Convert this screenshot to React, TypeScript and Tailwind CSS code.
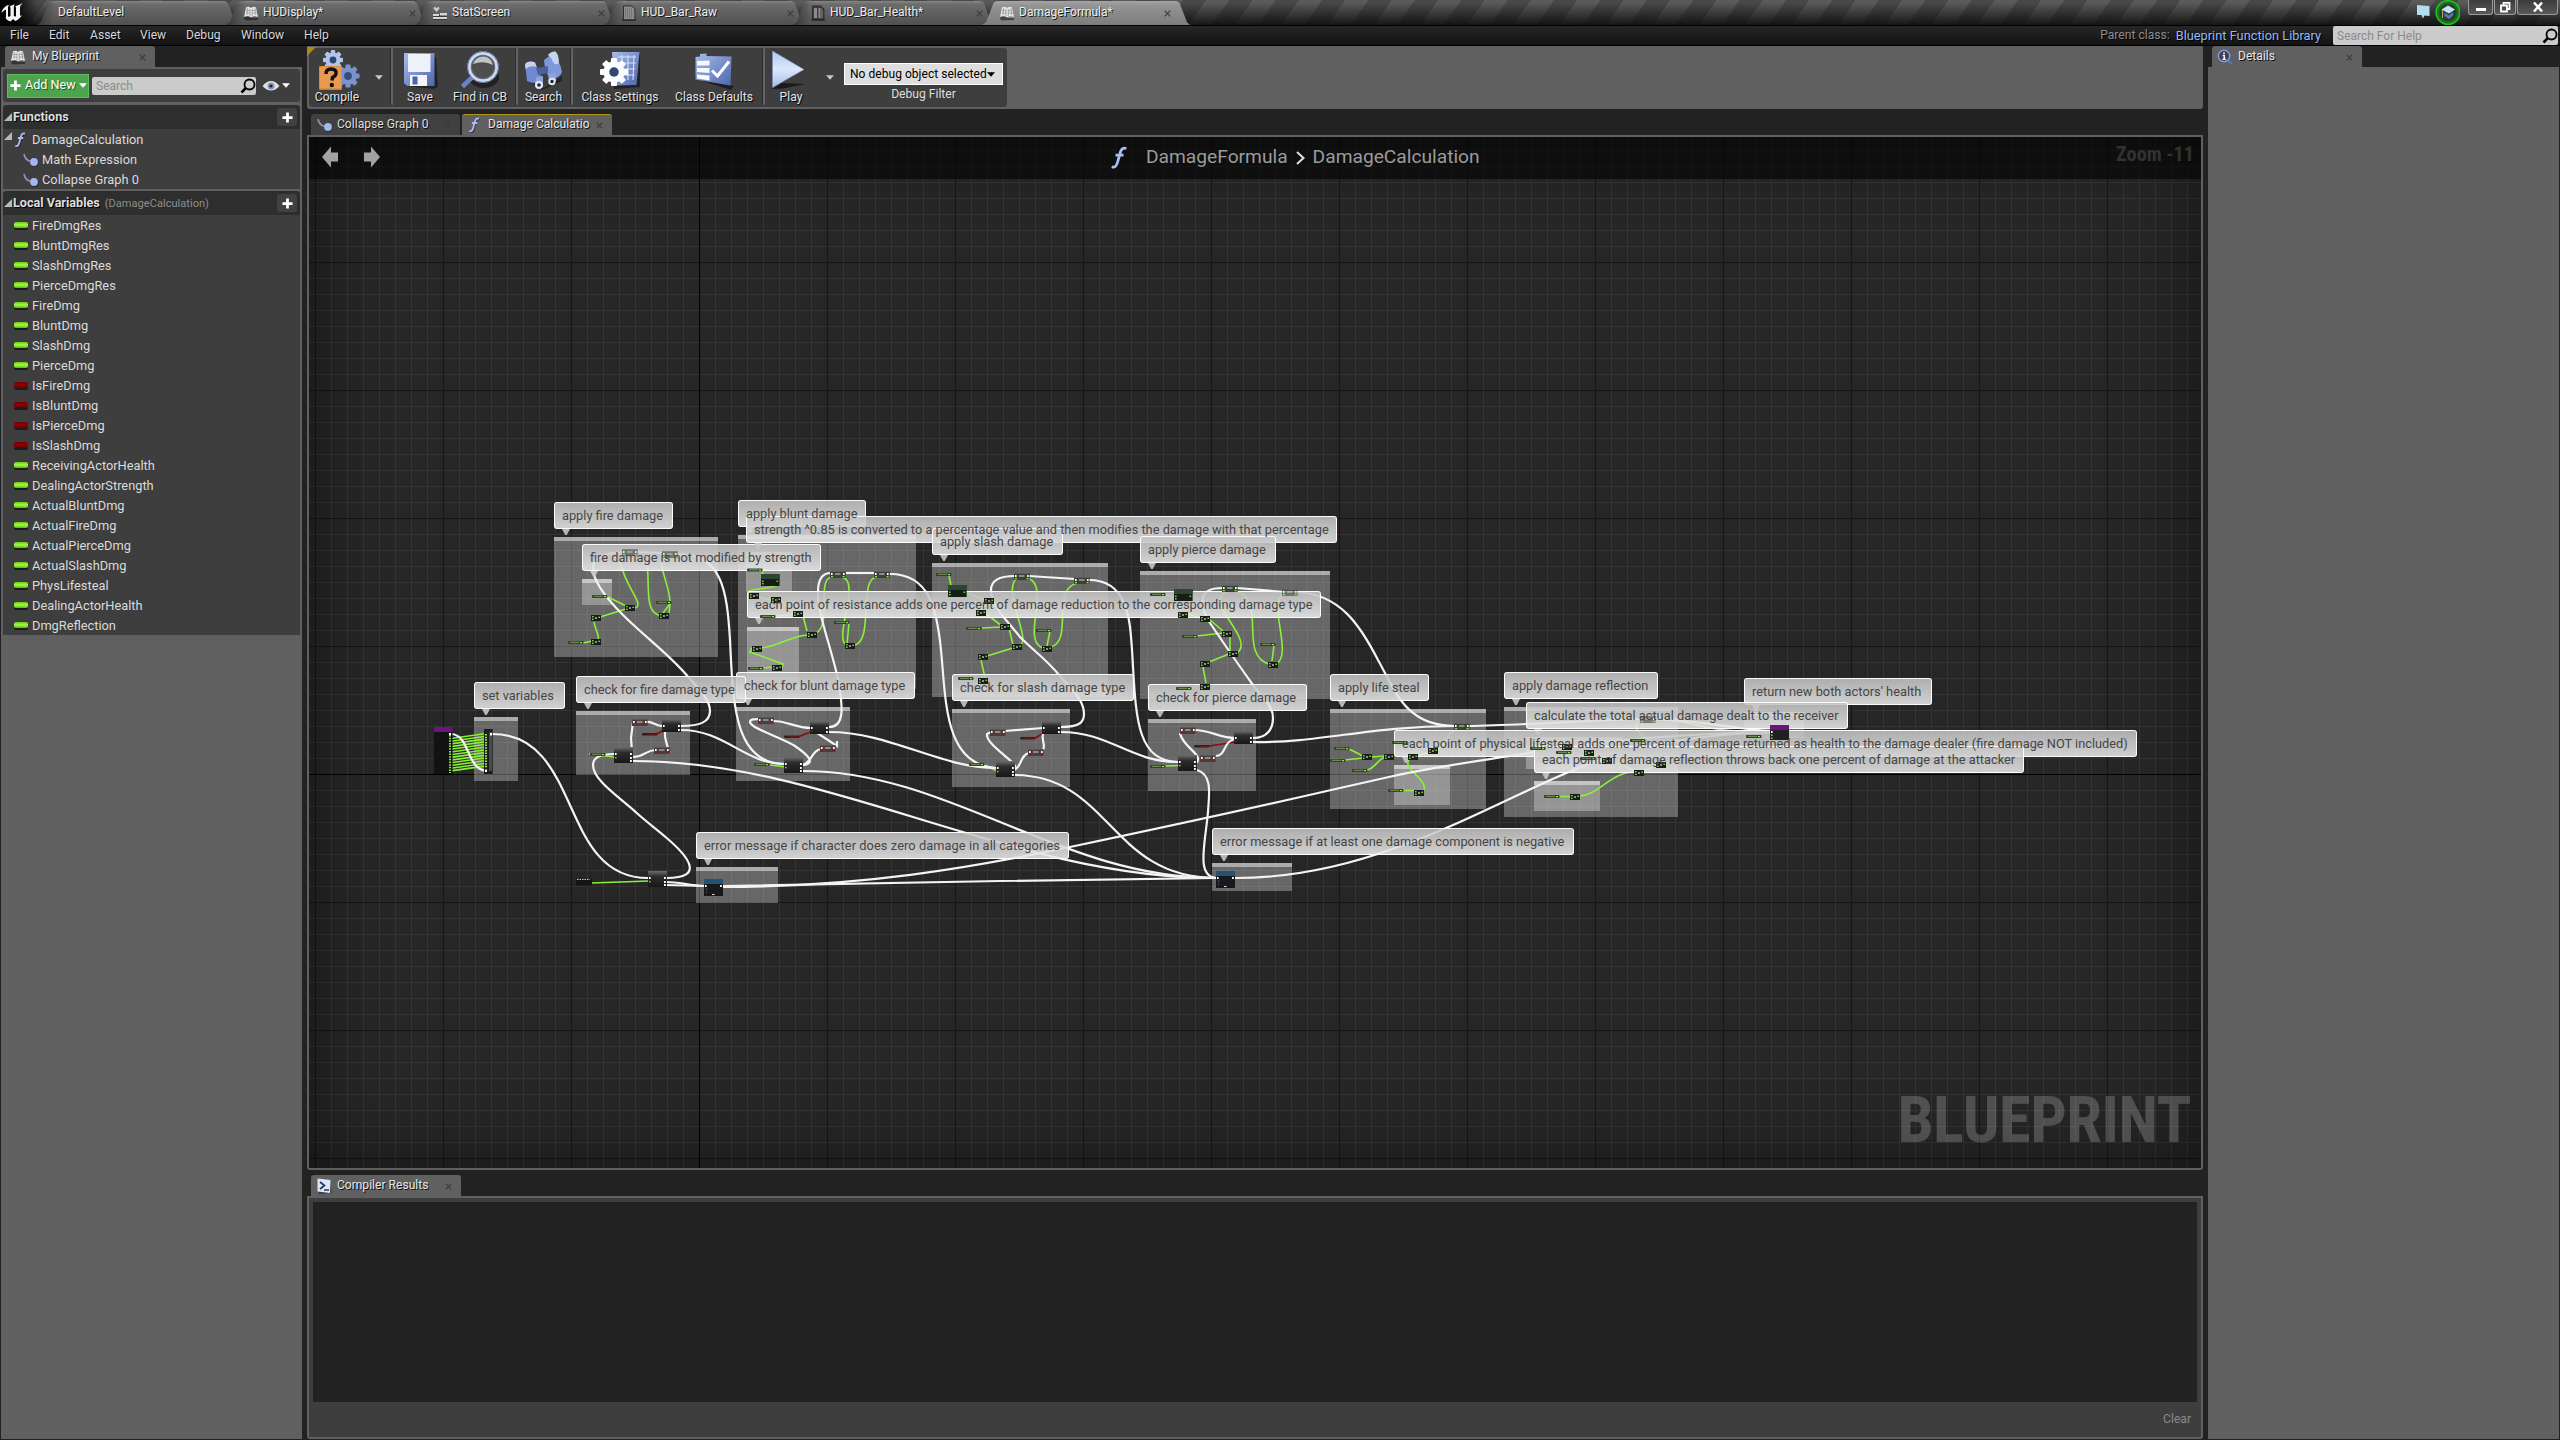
import React from "react";

const OX = 309;
const OY = 137;

const fileTabs = [
  { label: "DefaultLevel", icon: "none" },
  { label: "HUDisplay*", icon: "blueprint" },
  { label: "StatScreen", icon: "widget" },
  { label: "HUD_Bar_Raw", icon: "doc" },
  { label: "HUD_Bar_Health*", icon: "docgrid" },
  { label: "DamageFormula*", icon: "blueprint", active: true },
];

const variables: [string, boolean][] = [
  ["FireDmgRes", true],
  ["BluntDmgRes", true],
  ["SlashDmgRes", true],
  ["PierceDmgRes", true],
  ["FireDmg", true],
  ["BluntDmg", true],
  ["SlashDmg", true],
  ["PierceDmg", true],
  ["IsFireDmg", false],
  ["IsBluntDmg", false],
  ["IsPierceDmg", false],
  ["IsSlashDmg", false],
  ["ReceivingActorHealth", true],
  ["DealingActorStrength", true],
  ["ActualBluntDmg", true],
  ["ActualFireDmg", true],
  ["ActualPierceDmg", true],
  ["ActualSlashDmg", true],
  ["PhysLifesteal", true],
  ["DealingActorHealth", true],
  ["DmgReflection", true],
];

// x, y, width, height of the comment frames
const frames: [number, number, number, number][] = [
  [554, 537, 164, 120],
  [582, 579, 30, 26],
  [738, 535, 178, 154],
  [746, 552, 46, 40],
  [747, 627, 52, 54],
  [932, 563, 176, 134],
  [1140, 571, 190, 128],
  [576, 711, 114, 64],
  [736, 707, 114, 74],
  [952, 709, 118, 78],
  [1148, 719, 108, 72],
  [1330, 709, 156, 100],
  [1394, 765, 56, 40],
  [1504, 707, 174, 110],
  [1526, 737, 96, 32],
  [1534, 781, 66, 30],
  [1744, 712, 60, 26],
  [474, 717, 44, 64],
  [696, 867, 82, 36],
  [1212, 863, 80, 28],
];

// x, y, width, text and letter spacing of the comment bubbles
const bubbles: [number, number, number, string, number][] = [
  [554, 502, 119, "apply fire damage", 0],
  [582, 544, 239, "fire damage is not modified by strength", 0],
  [738, 500, 128, "apply blunt damage", 0],
  [746, 516, 591, "strength ^0.85 is converted to a percentage value and then modifies the damage with that percentage", 0.015],
  [932, 528, 131, "apply slash damage", 0],
  [1140, 536, 136, "apply pierce damage", 0],
  [747, 591, 574, "each point of resistance adds one percent of damage reduction to the corresponding damage type", 0.017],
  [736, 672, 179, "check for blunt damage type", 0],
  [576, 676, 170, "check for fire damage type", 0],
  [952, 674, 182, "check for slash damage type", 0.09],
  [1148, 684, 159, "check for pierce damage", 0],
  [1330, 674, 99, "apply life steal", 0],
  [1504, 672, 154, "apply damage reflection", 0],
  [1744, 678, 188, "return new both actors' health", 0.03],
  [1526, 702, 322, "calculate the total actual damage dealt to the receiver", 0.015],
  [1394, 730, 743, "each point of physical lifesteal adds one percent of damage returned as health to the damage dealer (fire damage NOT included)", 0],
  [1534, 746, 490, "each point of damage reflection throws back one percent of damage at the attacker", 0.01],
  [474, 682, 91, "set variables", 0],
  [696, 832, 373, "error message if character does zero damage in all categories", 0.095],
  [1212, 828, 362, "error message if at least one damage component is negative", 0.015],
];

const execWires = [
  "M452 734 C470 736 466 768 486 771",
  "M492 734 C583 734 558 878 648 878",
  "M666.7 878 C705 878 689 857 666.7 838 C655 828 648 823 636.7 813 C618 796 593 780 593 765 C593 757 600 754 614 754",
  "M666 882 C680 882 690 886 705 886",
  "M666 885 L705 886",
  "M723 886 L1000 881 L1216 878",
  "M723 887 C860 887 970 868 1070 847 C1170 826 1240 811 1340 788 L1380 779 C1430 767 1480 761 1535 752 C1620 738 1700 733 1770 732",
  "M633 761 C830 761 1010 878 1216 878",
  "M803 771 C950 771 1060 878 1216 878",
  "M1014 775 C1110 775 1110 878 1216 878",
  "M1197 770 C1213 775 1209 795 1208 812 C1205 845 1196 876 1216 878",
  "M681 726 C700 726 710 722 710 711 C710 700 700 690 688 676.7 C670 655 645 637 623 615 C608 600 593 582 593 568 C593 556 608 552.5 623 552.5",
  "M638 552 L663 553",
  "M678 554 C722 554 727 590 730 640 C733 700 733 764 785 764",
  "M681 730 C725 730 745 764 785 764",
  "M632 751 L631 738 L633 722",
  "M647 722 C653 721 656 727 664 726",
  "M633 757 C645 757 645 750 656 750",
  "M668 749 C667 742 664 740 665 731",
  "M773 721 C788 721 795 728 811 728",
  "M803 765 C818 763 805 753 795 746 C780 737 750 728 750 722 C750 719 755 719 760 719",
  "M803 765 C812 762 812 750 821 749",
  "M811 729 L837 746 L837 741",
  "M829 727 C845 727 842 706 840 690 C836 660 817 615 818 592 C818 580 822 573 831 573",
  "M846 573 L876 573",
  "M890 574 C930 574 937 610 941 650 C946 700 944 765 996 768",
  "M829 732 C890 732 940 768 996 768",
  "M1005 731 L1043 728",
  "M1014 768 C1022 765 985 745 987 734 L991 732",
  "M1014 770 C1022 767 1020 755 1029 753",
  "M1043 750 C1046 745 1041 740 1043 733",
  "M1061 727 C1080 727 1084 722 1084 714 C1084 700 1072 690 1060 676 C1045 658 1035 652 1020 637 C1005 618 991 606 991 590 C991 580 1000 576 1015 576",
  "M1029 576 L1075 579",
  "M1089 580 C1128 580 1130 620 1132 650 C1136 710 1134 762 1178 762",
  "M1061 732 C1110 732 1130 762 1178 762",
  "M1194 730 C1210 730 1220 738 1235 738",
  "M1196 763 C1205 755 1182 747 1180 733",
  "M1215 756 C1227 756 1222 742 1235 739",
  "M1253 738 C1268 738 1273 728 1273 718 C1273 705 1262 698 1253 685 C1235 660 1225 645 1210 623 C1203 612 1202 605 1202.7 600 C1203 590 1212 588 1223 588",
  "M1237 588 L1284 592",
  "M1297 592 C1340 594 1360 625 1378 660 C1395 690 1405 726 1455 726",
  "M1253 742 C1320 743 1370 726 1455 726",
  "M1469 726 C1520 725 1580 721 1640 719",
  "M1655 719 C1700 720 1740 730 1770 731",
  "M1235 878 C1290 878 1340 868 1395 848 C1440 833 1490 808 1533 788 C1600 756 1660 736 1770 732",
];

const dataWires = [
  "M591 883 L649 881",
  "M589 754 L615 757",
  "M606 596 L626 606",
  "M600 617 L626 609",
  "M594 622 C595 630 600 635 598 640",
  "M583 643 L592 641",
  "M620 561 C624 582 638 598 638 604 C638 608 635 608 634 607",
  "M647 560 C650 590 644 612 661 616",
  "M661 562 C664 580 670 590 670 602",
  "M663 613 L670 604 L669 613",
  "M761 571 L764 576",
  "M779 584 C775 589 752 588 748 592",
  "M758 597 L772 600",
  "M780 600 L794 612",
  "M775 616 L794 614",
  "M803 616 L807 631",
  "M761 648 C780 646 790 636 808 635",
  "M752 648 L750 652 L783 664 L782 668",
  "M762 668 L774 667",
  "M816 633 C832 626 816 578 832 577",
  "M842 577 C862 582 832 640 847 645",
  "M849 623 L847 644",
  "M855 645 C874 640 858 578 877 577",
  "M949 575 L951 586",
  "M966 592 L985 600",
  "M990 603 L978 610",
  "M985 613 L1002 626",
  "M982 628 L1001 627",
  "M1009 628 L1013 645",
  "M987 656 L1013 648",
  "M981 660 L985 678",
  "M1017 578 C1001 590 1032 640 1020 645",
  "M1028 578 C1052 588 1020 640 1043 648",
  "M1050 631 L1047 646",
  "M1051 647 C1074 640 1050 588 1078 583",
  "M1209 619 L1223 631",
  "M1197 636 L1223 633",
  "M1230 636 L1230 651",
  "M1209 662 L1229 654",
  "M1203 667 L1206 683",
  "M1191 688 L1201 685",
  "M1226 592 C1203 602 1256 640 1237 653",
  "M1237 592 C1267 600 1238 655 1269 664",
  "M1274 645 L1272 661",
  "M1276 664 C1294 655 1266 600 1284 594",
  "M1188 614 L1201 618",
  "M1166 595 L1175 597",
  "M1165 766 L1179 765.5",
  "M770 765 L786 767",
  "M984 765 L997 771",
  "M1349 749 L1363 756",
  "M1345 760 L1363 758",
  "M1371 757 L1385 756",
  "M1367 770 C1376 768 1378 758 1386 757",
  "M1409 760 C1402 768 1428 780 1424 790",
  "M1403 790.5 H1415",
  "M1417 756 L1429 752",
  "M1437 750 C1448 745 1445 733 1456 730",
  "M1559 796.5 H1571",
  "M1579 796 C1600 795 1610 772 1635 772",
  "M1611 760 L1635 771",
  "M1643 771 L1657 765",
  "M1637 722 C1634 735 1645 735 1653 742",
  "M1655 720 C1690 720 1700 728 1725 730 L1770 734",
];

const redWires = [
  "M656 734 L667 729",
  "M799 736.5 L813 731",
  "M1035 738 L1046 732",
  "M1209 746 L1236 742",
];

const opNodes: [number, number][] = [
  [625, 605], [591, 615], [591, 639], [659, 613],
  [749, 593], [771, 597], [793, 611], [807, 632], [845, 643], [752, 646], [772, 665],
  [984, 598], [976, 610], [1000, 624], [1012, 644], [978, 654], [978, 678], [1042, 646],
  [1178, 612], [1200, 616], [1222, 631], [1228, 651], [1200, 661], [1200, 684], [1268, 662],
  [1362, 754], [1384, 754], [1408, 754], [1428, 748], [1414, 790],
  [1562, 744], [1584, 750], [1602, 758], [1634, 770], [1656, 762], [1570, 794],
];

const pills: [number, number][] = [
  [592, 595], [656, 601], [568, 641], [590, 753],
  [747, 568.5], [760, 615], [834, 621], [748, 667], [754, 763],
  [936, 573], [966, 627], [1036, 629], [958, 677], [969, 763],
  [1150, 593], [1182, 635], [1260, 643], [1176, 687], [1150, 765],
  [1334, 747], [1330, 759], [1352, 769], [1392, 741], [1388, 789],
  [1530, 747], [1556, 751], [1580, 757], [1630, 739], [1544, 795], [1746, 735],
];

const redPills: [number, number][] = [
  [642, 733], [784, 735.5], [1020, 737], [1194, 745],
];

const setNodes: [number, number, boolean][] = [
  [622, 549, false], [662, 551, false], [830, 571, false], [874, 571, false],
  [1014, 573, false], [1074, 577, false], [1222, 585, false], [1282, 589, false],
  [1454, 723, false], [1640, 716, false],
  [632, 719, true], [654, 747, true], [758, 717, true], [820, 745, true],
  [990, 729, true], [1028, 749, true], [1180, 727, true], [1200, 755, true],
];

const branchNodes: [number, number, number][] = [
  [614, 747, 16], [662, 719, 13], [784, 757, 16], [810, 721, 13],
  [996, 761, 16], [1042, 721, 13], [1178, 755, 16], [1234, 731, 13],
  [648, 871, 16],
];

const powNodes: [number, number][] = [[761, 574], [948, 585], [1174, 589]];

function BlueprintIcon() {
  return (
    <svg viewBox="0 0 17 16" className="h-4 w-[17px] shrink-0">
      <path d="M1 14 L3 5 Q5 3 8 5 L8.500 13 L15 13 Q16 15 13 15 L3 15.500Z" fill="#111" opacity=".55" />
      <path d="M1 12 L3 2.500 Q5.500 1 8 3 Q10.500 1 13 2.500 L15 12 Q11 10.500 8 12.500 Q5 10.500 1 12Z" fill="#e4e4e4" />
      <path d="M4.500 3 L4 10 M7 4 V11 M9.300 4 V11 M12 3 L12.600 10 M3 5.500H7 M3 8H7 M9 5.500H13 M9 8H14" stroke="#9a9a9a" strokeWidth=".8" />
    </svg>
  );
}

function TabIcon({ kind }: { kind: string }) {
  if (kind === "blueprint") return <BlueprintIcon />;
  if (kind === "widget")
    return (
      <svg viewBox="0 0 17 16" className="h-4 w-[17px] shrink-0">
        <path d="M4.500 7 L1.500 3.500 Q2 1 4.500 3 Q7 1 7.500 3.500Z" fill="#c9c9c9" />
        <path d="M1 10H15V12H1Z M1 13.500H15V15H1Z" fill="#222" opacity=".6" />
        <path d="M1 9H7V11H1Z M8 8H15V10.500H8Z M1 12H15V14H1Z" fill="#d6d6d6" />
      </svg>
    );
  if (kind === "doc" || kind === "docgrid")
    return (
      <svg viewBox="0 0 17 16" className="h-4 w-[17px] shrink-0">
        <path d="M2.500 1H11L14 4V15H2.500Z" fill={kind === "doc" ? "#8e8e8e" : "#3c3c3c"} stroke="#2c2c2c" />
        <path
          d="M4 4H12 M4 6H12.500 M4 8H12.500 M4 10H12.500 M4 12H12.500"
          stroke={kind === "doc" ? "#5a5a5a" : "#d8d8d8"}
          strokeDasharray={kind === "doc" ? "1 1" : "3 1.500 2 1"}
        />
        <path d="M1 15H15" stroke="#1c1c1c" />
      </svg>
    );
  return null;
}

function FunctionIcon({ className }: { className: string }) {
  return (
    <svg viewBox="0 0 14 18" className={className}>
      <path d="M1.500 16 Q4.500 17.500 5.600 12.500 L7.600 5 Q8.700 .8 12.500 2" fill="none" stroke="#111" strokeWidth="2" opacity=".5" transform="translate(1 .8)" />
      <path d="M1.200 15.600 Q4.300 17 5.600 12 L7.600 4.700 Q8.600 .8 12.200 1.900 M4 6.800H10" fill="none" stroke="#a9bdf2" strokeWidth="2.100" />
    </svg>
  );
}

function GraphIcon() {
  return (
    <svg viewBox="0 0 17 14" className="h-[14px] w-[17px] shrink-0">
      <path d="M1 1 Q2 7 8 8.500" fill="none" stroke="#8a93ad" strokeWidth="1.700" />
      <circle cx="11.500" cy="10" r="4" fill="#1b1b1b" opacity=".6" />
      <circle cx="11" cy="9" r="3.900" fill="#a3b6ee" />
    </svg>
  );
}

function Close({ className = "" }: { className?: string }) {
  return (
    <svg viewBox="0 0 7 7" className={`h-[7px] w-[7px] shrink-0 ${className}`}>
      <path d="M.7 .7 L6.300 6.300 M6.300 .7 L.7 6.300" stroke="#3b3b3b" strokeWidth="1.200" />
    </svg>
  );
}

function Magnifier() {
  return (
    <svg viewBox="0 0 16 16" className="h-4 w-4 shrink-0">
      <circle cx="9.500" cy="6.500" r="5" fill="none" stroke="#000" strokeWidth="1.800" />
      <path d="M5.700 10.200 L1.500 14.500" stroke="#000" strokeWidth="2.600" />
    </svg>
  );
}

function Chevron({ className }: { className: string }) {
  return (
    <svg viewBox="0 0 8 5" className={`h-[5px] w-2 shrink-0 ${className}`}>
      <path d="M0 .3H8L4 4.700Z" fill="currentColor" />
    </svg>
  );
}

function Plus({ className }: { className: string }) {
  return (
    <svg viewBox="0 0 12 12" className={className}>
      <path d="M6 .5V11.500M.5 6H11.500" stroke="#fff" strokeWidth="3" />
    </svg>
  );
}

function TitleBar() {
  return (
    <div className="flex h-[25px] w-full shrink-0 bg-[linear-gradient(180deg,rgba(0,0,0,0)_10%,rgba(10,10,10,0.85)_100%),repeating-linear-gradient(125deg,#5a5a5a_0px,#5a5a5a_19px,#484848_19px,#484848_38px)]">
      <div className="h-full w-[37px] shrink-0 bg-[linear-gradient(90deg,#050505_40%,transparent)]">
        <svg viewBox="0 0 26 24" className="h-6 w-[26px]">
          <path
            d="M1.500 13 Q2.500 6.500 9.500 4.500 Q8 5.600 8 7.500 V15.500 Q8 17.200 9.400 16.800 L10.500 15.800 V8 Q10.500 6.600 9.500 6.300 Q14 5 14.500 3.800 Q13.800 6 13.800 8 V15.600 Q14.500 17.200 16 16.300 V8 Q16 6.600 15 6.300 Q19 5.500 22.500 3 Q20 5.600 20 8 V15 Q20 16.200 21.800 15.200 Q19.500 19.500 15 21 L13.200 19 L10.400 21.400 Q6.500 20.500 5.500 17.500 Q6 17.700 6 16.500 V10 Q5.500 8.500 1.500 13Z"
            fill="#f4f4f4"
          />
        </svg>
      </div>
      {fileTabs.map((t) => (
        <div
          key={t.label}
          className={`relative -mr-3 mt-px flex h-6 shrink-0 items-center [clip-path:polygon(0_100%,2%_88%,5.500%_8%,7%_0,93.500%_0,95%_8%,98.500%_88%,100%_100%)] ${
            t.icon === "none" ? "pl-[26px]" : "pl-[21px]"
          } ${
            t.active
              ? "w-[208px] bg-[linear-gradient(180deg,#a4a4a4_0%,#939393_20%,#7d7d7d_100%)]"
              : "w-[201px] bg-[linear-gradient(100deg,rgba(20,20,20,0.55)_0px,rgba(20,20,20,0)_20px),linear-gradient(180deg,#858585_0%,#6c6c6c_14%,#505050_100%)]"
          }`}
        >
          {t.icon !== "none" && (
            <span className="mr-1 flex h-4 w-[17px] -translate-x-1">
              <TabIcon kind={t.icon} />
            </span>
          )}
          <span className="-mt-[3px] flex-1 -translate-x-[5px] text-[12px] text-[#ececec] [text-shadow:1px_1px_0_#1a1a1a]">{t.label}</span>
          {t.icon !== "none" && <Close className={t.active ? "mr-[19px]" : "mr-[11px]"} />}
        </div>
      ))}
      <div className="ml-auto flex h-full pr-[2px]">
        <svg viewBox="0 0 46 26" className="mr-[8px] h-[26px] w-[46px]">
          <path d="M3 5 L15.500 6 V16 L10.500 15.500 L9 18.500 L7.500 15 L3 15Z" fill="#b4dcee" />
          <circle cx="34" cy="12.500" r="11.700" fill="#23402a" stroke="#10d010" strokeWidth="1.800" />
          <circle cx="34" cy="12.500" r="10" fill="none" stroke="#1d8a22" strokeWidth="2.600" opacity=".6" />
          <path d="M27.500 9.500 L34 5.500 L41 9.500 L35 13.500Z" fill="#c8e0f4" />
          <path d="M30.500 12.500 L35 15.500 L39 12 V15.500 L35 19 L30.500 16Z" fill="#5a7ab4" />
          <path d="M28.500 10V18" stroke="#b89a62" strokeWidth="1.200" />
        </svg>
        {["min", "max", "close"].map((k) => (
          <div
            key={k}
            className={`mr-px flex h-[15px] items-center justify-center rounded-b-[3px] border border-t-0 border-[#9a9a9a] bg-[linear-gradient(180deg,#3c3c3c,#585858)] last:mr-0 ${
              k === "close" ? "w-[41px]" : k === "min" ? "w-[25px]" : "w-[22px]"
            }`}
          >
            <svg viewBox="0 0 12 12" className="h-3 w-3">
              {k === "min" && <path d="M1 8.500H11" stroke="#fff" strokeWidth="3" />}
              {k === "max" && <path d="M2 4.500H8V10.500H2Z M4.500 4V1.800H10.500V8H8.500" fill="none" stroke="#fff" strokeWidth="1.800" />}
              {k === "close" && <path d="M2 1.500 L10 10.500 M10 1.500 L2 10.500" stroke="#fff" strokeWidth="2.500" />}
            </svg>
          </div>
        ))}
      </div>
    </div>
  );
}

function MenuBar() {
  return (
    <div className="flex h-[21px] shrink-0 items-center border-y border-black bg-[linear-gradient(180deg,#262626,#131313)] text-[12.100px] text-[#d6d6d6] [text-shadow:1px_1px_0_#000]">
      <span className="ml-[10px] w-[39px]">File</span>
      <span className="w-[41px]">Edit</span>
      <span className="w-[50px]">Asset</span>
      <span className="w-[46px]">View</span>
      <span className="w-[55px]">Debug</span>
      <span className="w-[63px]">Window</span>
      <span>Help</span>
      <span className="ml-auto text-[#8e8e8e]">Parent class:</span>
      <span className="ml-[6px] mr-3 text-[12.800px] text-[#8cb9ff]">Blueprint Function Library</span>
      <div className="mr-[2px] flex h-[19px] w-[225px] items-center rounded-[2px] bg-[#cbcbcb] pl-[4px] text-[12px] text-[#8b8b8b] [text-shadow:none]">
        <span className="flex-1">Search For Help</span>
        <Magnifier />
      </div>
    </div>
  );
}

function PanelTab({ icon, label, className = "" }: { icon: React.ReactNode; label: string; className?: string }) {
  return (
    <div className={`flex h-[21px] w-[150px] shrink-0 items-center rounded-t-[3px] bg-[#606060] pl-[5px] ${className}`}>
      {icon}
      <span className="-mt-px ml-[5px] flex-1 text-[12.100px] text-[#e6e6e6] [text-shadow:1px_1px_0_#111]">{label}</span>
      <Close className="mr-[9px] mt-px" />
    </div>
  );
}

function SectionHeader({ title, sub }: { title: string; sub?: string }) {
  return (
    <div className="flex h-6 items-center rounded-t-[3px] bg-[#2e2e2e]">
      <svg viewBox="0 0 8 8" className="ml-px h-2 w-2">
        <path d="M8 0V8H0Z" fill="#b9b9b9" />
      </svg>
      <span className="ml-px text-[12.600px] font-bold text-[#dedede] [text-shadow:1px_1px_0_#000]">{title}</span>
      {sub && <span className="ml-[5px] mt-[2px] text-[11.100px] text-[#8d8d8d]">{sub}</span>}
      <div className="ml-auto mr-[3px] flex h-[18px] w-5 items-center justify-center rounded-[3px] bg-[#414141]">
        <Plus className="h-[11px] w-[11px]" />
      </div>
    </div>
  );
}

function MyBlueprint() {
  return (
    <div className="flex w-[302px] shrink-0 flex-col pl-px">
      <PanelTab icon={<BlueprintIcon />} label="My Blueprint" className="ml-1" />
      <div className="flex-1 bg-[#606060] px-[2px] pt-[2px]">
        <div className="mb-[3px] flex h-[33px] items-center rounded-[3px] bg-[#3e3e3e] pl-1">
          <div className="flex h-6 w-[82px] items-center border border-[#5cbf5c] bg-[#4ca54e] pl-[2px]">
            <Plus className="h-[11px] w-[11px]" />
            <span className="ml-1 text-[12.600px] text-white [text-shadow:1px_1px_0_#1e5a20]">Add New</span>
            <Chevron className="ml-[3px] text-white" />
          </div>
          <div className="ml-[3px] flex h-[18px] w-[164px] items-center rounded-[2px] bg-[#cbcbcb] pl-1 text-[12px] text-[#8b8b8b]">
            <span className="flex-1">Search</span>
            <Magnifier />
          </div>
          <svg viewBox="0 0 18 12" className="ml-[6px] h-3 w-[18px]">
            <path d="M.5 6 Q9 -4 17.500 6 Q9 15 .5 6Z" fill="#e2e2e2" />
            <circle cx="9" cy="6" r="3.500" fill="#7f93b8" />
            <circle cx="9" cy="6" r="1.500" fill="#1c2330" />
          </svg>
          <Chevron className="ml-[2px] text-white" />
        </div>
        <SectionHeader title="Functions" />
        <div className="mb-[2px] flex flex-col bg-[#3e3e3e] text-[12.800px] text-[#dadada]">
          <div className="flex h-5 items-center pt-[2px]">
            <svg viewBox="0 0 8 8" className="-mt-2 ml-px h-2 w-2">
              <path d="M8 0V8H0Z" fill="#b9b9b9" />
            </svg>
            <FunctionIcon className="-mt-px ml-[2px] h-4 w-[13px]" />
            <span className="ml-[5px]">DamageCalculation</span>
          </div>
          {["Math Expression", "Collapse Graph 0"].map((n) => (
            <div key={n} className="flex h-5 items-center pl-5 pt-[2px]">
              <GraphIcon />
              <span className="ml-[2px]">{n}</span>
            </div>
          ))}
        </div>
        <SectionHeader title="Local Variables" sub="(DamageCalculation)" />
        <div className="flex flex-col bg-[#3e3e3e] text-[12.800px] text-[#dadada]">
          {variables.map(([name, isFloat]) => (
            <div key={name} className="flex h-5 items-center pl-[11px] pt-[2px]">
              <span
                className={`-mt-[2px] h-[6px] w-[14px] rounded-[2px] shadow-[0_2px_0_#1c1c1c] ${
                  isFloat ? "bg-[linear-gradient(180deg,#6fc423,#9dff3c_50%,#62ad1f)]" : "bg-[linear-gradient(180deg,#6d0000,#950000_50%,#5c0000)]"
                }`}
              />
              <span className="ml-[4px]">{name}</span>
            </div>
          ))}
        </div>
      </div>
    </div>
  );
}

function Gear({ cx, cy, r, fill, hole }: { cx: number; cy: number; r: number; fill: string; hole: string }) {
  return (
    <g>
      {[0, 45, 90, 135].map((a) => (
        <rect key={a} x={cx - r * 0.22} y={cy - r} width={r * 0.44} height={r * 2} rx="1" fill={fill} transform={`rotate(${a} ${cx} ${cy})`} />
      ))}
      <circle cx={cx} cy={cy} r={r * 0.76} fill={fill} />
      <circle cx={cx} cy={cy} r={r * 0.34} fill={hole} />
    </g>
  );
}

function ToolIcon({ kind }: { kind: string }) {
  return (
    <svg viewBox="0 0 40 40" className={`h-10 w-10 overflow-visible ${kind === "play" ? "-translate-x-1" : ""}`}>
      <defs>
        <linearGradient id="blueSteel" x1="0" y1="0" x2="1" y2="1">
          <stop offset="0" stopColor="#a9bcec" />
          <stop offset="1" stopColor="#4d67ad" />
        </linearGradient>
        <linearGradient id="playFill" x1="0" y1="0" x2="0" y2="1">
          <stop offset="0" stopColor="#b4c8f0" />
          <stop offset=".5" stopColor="#dbe7fa" />
          <stop offset="1" stopColor="#a8bdea" />
        </linearGradient>
      </defs>
      {kind === "compile" && (
        <>
          <Gear cx={16} cy={10} r={10} fill="#b3c4ec" hole="#2f4674" />
          <Gear cx={31} cy={26} r={11.500} fill="#7c92cc" hole="#3b4d80" />
          <rect x="2" y="16" width="23" height="24" rx="1" fill="#c97a35" />
          <rect x="2.500" y="16.500" width="22" height="22" rx="1" fill="#e99a50" />
          <path d="M9 24 Q9 19 14 19 Q19.500 19 19 23.500 Q18.700 26 15.500 27.500 L15 30.500" fill="none" stroke="#111" strokeWidth="3.400" />
          <circle cx="14.800" cy="35" r="2.200" fill="#111" />
        </>
      )}
      {kind === "save" && (
        <>
          <path d="M6 7H36L38 37L34 39L6 36Z" fill="#111" opacity=".6" />
          <path d="M4 3H34.500V36H7L4 33Z" fill="url(#blueSteel)" />
          <rect x="8" y="4" width="22.500" height="18" fill="#eef2fb" />
          <rect x="10" y="25" width="17" height="11" fill="#f3f5fb" />
          <rect x="12.500" y="26.500" width="5" height="8" fill="#4a64a6" />
        </>
      )}
      {kind === "find" && (
        <>
          <ellipse cx="24" cy="27" rx="15" ry="11" fill="#111" opacity=".6" />
          <path d="M13.500 26 L2.500 36.500" stroke="#6a83c8" strokeWidth="4.500" />
          <circle cx="23" cy="17" r="14" fill="#5f6b78" stroke="#cfdaf2" strokeWidth="3.500" />
          <circle cx="23" cy="17" r="11" fill="#4e4e4e" />
          <path d="M13 14 Q16 6 24 6.500 Q31 7 33 15 Q24 10 13 14Z" fill="#bfc4c8" />
          <circle cx="23" cy="17" r="15.500" fill="none" stroke="#5c6f9d" strokeWidth="1" />
        </>
      )}
      {kind === "search" && (
        <>
          <path d="M4 30 L20 38 L38 26 V31 L18 40Z" fill="#111" opacity=".6" />
          <path d="M1 14 Q5 10 11 12.500 L18 29 Q13 36 3 31Z" fill="#6f8ad0" />
          <path d="M1 14 Q5 10 11 12.500 L12.500 17 Q6 15 1.500 19Z" fill="#c5d2f0" />
          <path d="M20 10 L28 4 Q36 10 38 22 Q36 28 27 29 Q21 24 20 10Z" fill="#7f98da" />
          <path d="M24 5 Q27 1 31.500 1.500 Q35 5 35 13 Q31 16 29 12 Q28 8 24 5Z" fill="#c5d2f0" />
          <path d="M12 18 L24 16 V23 L14 25Z" fill="#4a5f9e" />
          <path d="M12 27 L19 26 L19 35H11Z M24 24 L32 23 V31H25Z" fill="#8ea3da" />
          <circle cx="15" cy="35" r="4" fill="#dfe7f8" />
          <circle cx="28" cy="31.500" r="3.700" fill="#dfe7f8" />
          <circle cx="15" cy="35" r="1.800" fill="#223" />
          <circle cx="28" cy="31.500" r="1.700" fill="#223" />
        </>
      )}
      {kind === "settings" && (
        <>
          <path d="M15 8 L40 4 L40 37 L14 39Z" fill="#111" opacity=".6" />
          <path d="M12 2H39.500L36.500 35L14 35.500Z" fill="url(#blueSteel)" />
          <path d="M18 7H36 M17.500 13H35.500 M17 19H35 M17 25H34.500 M22 5V28 M28 5V30 M34 5L33 30" stroke="#d8e2f8" strokeWidth="1.100" fill="none" />
          <Gear cx={14} cy={22} r={14} fill="#fbfcff" hole="#33486f" />
        </>
      )}
      {kind === "defaults" && (
        <>
          <path d="M6 30 L40 36 L37 40 L8 31Z" fill="#111" opacity=".7" />
          <path d="M1.500 7 L6 6.500V4L12.500 3.500V6L37.500 6.500 L36.500 35.500 L1.500 29.500Z" fill="url(#blueSteel)" />
          <path d="M3 11 L15.500 10.500V15.500L3 15.500Z M3 18 L15.500 18V23L3 22Z M3 24.500 L15.500 25.500V30.500L3 28.500Z" fill="#f6f8fe" />
          <path d="M18 20.500 L23.500 26 L35 11.500" fill="none" stroke="#fff" strokeWidth="3" />
        </>
      )}
      {kind === "play" && (
        <>
          <path d="M5 39 L15 33 L38 34 L16 38.500Z" fill="#111" opacity=".8" />
          <path d="M5.500 1 L37 19.500 L5.500 37.500Z" fill="url(#playFill)" stroke="#7f93bd" strokeWidth=".6" />
        </>
      )}
    </svg>
  );
}

function ToolButton({ kind, label, className }: { kind: string; label: string; className: string }) {
  return (
    <div className={`flex shrink-0 flex-col items-center pt-[2px] ${className}`}>
      <ToolIcon kind={kind} />
      <span className="mt-[-1px] whitespace-nowrap text-[12.100px] leading-4 text-[#e4e4e4] [text-shadow:1px_1px_0_#000]">{label}</span>
    </div>
  );
}

function Separator() {
  return <div className="h-[57px] w-[2px] shrink-0 rounded bg-[#636363] shadow-[-1px_0_0_#2c2c2c]" />;
}

function Toolbar() {
  return (
    <div className="h-[63px] shrink-0 rounded-b-[3px] bg-[#606060] pl-[2px] pt-[2px]">
      <div className="relative flex h-[59px] w-[698px] rounded-[3px] bg-[#3e3e3e]">
        <div className="absolute left-[-2px] top-[-1px] h-[9px] w-[9px] bg-[#a98d1c] [clip-path:polygon(0_0,100%_0,0_100%)]" />
        <ToolButton kind="compile" label="Compile" className="ml-1 w-[48px]" />
        <div className="flex w-[30px] items-center justify-center">
          <Chevron className="mr-[-6px] text-[#c8c8c8]" />
        </div>
        <Separator />
        <ToolButton kind="save" label="Save" className="ml-[6px] w-[42px]" />
        <ToolButton kind="find" label="Find in CB" className="ml-[6px] w-[66px]" />
        <div className="w-[3px]" />
        <Separator />
        <ToolButton kind="search" label="Search" className="w-[51px]" />
        <div className="w-[2px]" />
        <Separator />
        <ToolButton kind="settings" label="Class Settings" className="ml-[2px] w-[90px]" />
        <ToolButton kind="defaults" label="Class Defaults" className="ml-[2px] w-[94px]" />
        <div className="w-[2px]" />
        <Separator />
        <ToolButton kind="play" label="Play" className="w-[52px]" />
        <div className="flex w-[18px] items-center justify-center">
          <Chevron className="ml-[8px] text-[#c8c8c8]" />
        </div>
        <div className="ml-auto mr-1 flex w-[159px] flex-col items-center pt-[15px]">
          <div className="flex h-[22px] w-full items-center justify-between border border-white bg-[#dedede] pl-[5px] pr-[7px] text-[12px] text-black">
            <span className="whitespace-nowrap tracking-[0.040px]">No debug object selected</span>
            <Chevron className="text-black" />
          </div>
          <span className="mt-px text-[12.100px] leading-4 text-[#dcdcdc]">Debug Filter</span>
        </div>
      </div>
    </div>
  );
}

function Bubble({ x, y, w }: { x: number; y: number; w: number }) {
  return (
    <div className="absolute" style={{ left: x - OX, top: y - OY, width: w }}>
      <div className="h-[27px] rounded-[3px] border border-white/95 bg-[linear-gradient(180deg,rgba(192,192,192,0.88),rgba(234,234,234,0.88))] bg-origin-border" />
      <div className="ml-2 h-[6px] w-2 bg-[#c6c6c6]/90 [clip-path:polygon(0_0,100%_0,60%_100%,40%_100%)]" />
    </div>
  );
}

function Graph() {
  return (
    <div className="relative flex-1 overflow-hidden rounded-b-[3px] border-2 border-[#606060] bg-[#262626]">
      <div className="absolute inset-0 bg-[linear-gradient(#343434_1px,transparent_1px),linear-gradient(90deg,#343434_1px,transparent_1px)] bg-[length:16px_16px] bg-[position:6px_13px]" />
      <div className="absolute inset-0 bg-[linear-gradient(#161616_1px,transparent_1px),linear-gradient(90deg,#161616_1px,transparent_1px)] bg-[length:128px_128px] bg-[position:6px_125px]" />
      <div className="absolute left-0 top-[637px] h-px w-full bg-black" />
      <div className="absolute left-[390px] top-0 h-full w-px bg-black" />

      {frames.map(([x, y, w, h]) => (
        <div
          key={`${x}-${y}`}
          className="absolute border-t-4 border-white/45 bg-white/30"
          style={{ left: x - OX, top: y - OY, width: w, height: h }}
        />
      ))}

      <svg viewBox="309 137 1892 1031" className="absolute left-0 top-0 h-[1031px] w-[1892px]" fill="none">
        {Array.from({ length: 13 }, (_, i) => (
          <path key={i} d={`M451 ${738.500 + i * 2.700} L486 ${733.500 + i * 2.700}`} stroke="#86ee33" strokeWidth="1.600" />
        ))}
        {dataWires.map((d) => (
          <path key={d} d={d} stroke="#8af03a" strokeWidth="1.600" />
        ))}
        {redWires.map((d) => (
          <path key={d} d={`${d}`} stroke="#8f0a0a" strokeWidth="1.600" />
        ))}
        {execWires.map((d) => (
          <path key={d} d={d} stroke="#f4f4f4" strokeWidth="2.200" />
        ))}
      </svg>

      {bubbles.map(([x, y, w, text]) => (
        <Bubble key={text} x={x} y={y} w={w} />
      ))}

      <svg viewBox="309 137 1892 1031" className="absolute left-0 top-0 h-[1031px] w-[1892px]" fill="none">
        <defs>
          <linearGradient id="nodeHead" x1="0" y1="0" x2="0" y2="1">
            <stop offset="0" stopColor="#6d6d6d" />
            <stop offset=".35" stopColor="#2c2c2c" />
            <stop offset="1" stopColor="#161816" />
          </linearGradient>
        </defs>
        {pills.map(([x, y]) => (
          <g key={`${x}-${y}`}>
            <rect x={x} y={y} width="15.500" height="3" rx="1" fill="#33402a" />
            <path d={`M${x + 2} ${y + 1.300}h9`} stroke="#7fa860" strokeWidth=".9" />
            <rect x={x + 12} y={y + 1} width="2" height="1.200" fill="#8fee45" />
          </g>
        ))}
        {redPills.map(([x, y]) => (
          <g key={`${x}-${y}`}>
            <rect x={x} y={y} width="15.500" height="2.600" rx="1" fill="#3a1a1a" />
            <path d={`M${x + 5} ${y + 1.300}h10`} stroke="#7a1616" strokeWidth="1" />
          </g>
        ))}
        {opNodes.map(([x, y]) => (
          <g key={`${x}-${y}`}>
            <rect x={x} y={y} width="10" height="6" fill="#191c18" />
            <rect x={x + 1} y={y + 1} width="1.600" height="1.400" fill="#7fd63c" />
            <rect x={x + 1} y={y + 3.600} width="1.600" height="1.400" fill="#7fd63c" />
            <rect x={x + 4} y={y + 2} width="2" height="2" fill="#8a938a" />
            <rect x={x + 7.400} y={y + 1.600} width="1.600" height="1.400" fill="#7fd63c" />
          </g>
        ))}
        {setNodes.map(([x, y, isBool]) => (
          <g key={`${x}-${y}`} opacity={(y < 555 || x === 1282 || x === 1640) ? 0.6 : 1}>
            <rect x={x} y={y} width="15.600" height="7" fill={isBool ? "#4d3c3c" : "#3a4236"} />
            <path d={`M${x} ${y + 0.500}h15.600`} stroke={isBool ? "#7d4a4a" : "#55654b"} />
            <rect x={x + 5} y={y + 2} width="5.500" height="2" fill="#8b8b8b" />
            <rect x={x + 1} y={y + 2} width="1.600" height="2" fill="#fff" />
            <rect x={x + 13} y={y + 2} width="1.600" height="2" fill="#fff" />
            <rect x={x + 1} y={y + 5} width="2" height="1.300" fill={isBool ? "#8f1a1a" : "#86e63c"} />
            <rect x={x + 12.600} y={y + 5} width="2" height="1.300" fill={isBool ? "#8f1a1a" : "#86e63c"} />
          </g>
        ))}
        {branchNodes.map(([x, y, h]) => (
          <g key={`${x}-${y}`}>
            <rect x={x} y={y} width="19" height={h} fill="url(#nodeHead)" />
            <rect x={x + 1} y={y + 6} width="1.600" height="2" fill="#fff" />
            <rect x={x + 16} y={y + 6} width="1.800" height="2" fill="#fff" />
            <rect x={x + 16} y={y + 10} width="1.800" height="2" fill="#fff" />
            {h === 16 && <rect x={x + 16} y={y + 13} width="1.800" height="2" fill="#fff" />}
            <rect x={x + 1} y={y + 10} width="1.600" height="1.300" fill={h === 16 ? "#7fd63c" : "#9b1414"} />
          </g>
        ))}
        {powNodes.map(([x, y]) => (
          <g key={`${x}-${y}`}>
            <rect x={x} y={y} width="18.600" height="12" fill="#161c16" />
            <rect x={x} y={y} width="18.600" height="5" fill="#2c4630" />
            <rect x={x + 1} y={y + 6.500} width="1.600" height="1.400" fill="#7fd63c" />
            <rect x={x + 1} y={y + 9} width="1.600" height="1.400" fill="#7fd63c" />
            <rect x={x + 15.500} y={y + 6.500} width="1.600" height="1.400" fill="#7fd63c" />
          </g>
        ))}
        {/* function entry and the variable assignment beside it */}
        <rect x="434" y="727" width="18.500" height="47" fill="#121212" />
        <rect x="434" y="727" width="18.500" height="5" fill="#6b147d" />
        <path d="M450 735V773" stroke="#86e63c" strokeWidth="2" strokeDasharray="1.500 1.150" />
        <rect x="449" y="733" width="2" height="2" fill="#fff" />
        <rect x="484" y="729" width="8.700" height="45" fill="#1b1d1b" />
        <rect x="489" y="732" width="3" height="39" fill="#4a4a4a" />
        <path d="M486 734V768" stroke="#9ae86a" strokeWidth="2" strokeDasharray="1.500 1.150" />
        <rect x="485" y="769.500" width="2" height="2.500" fill="#fff" />
        <rect x="490" y="733" width="2" height="2.500" fill="#fff" />
        {/* zero check input */}
        <rect x="576" y="879" width="16" height="6.500" fill="#141414" />
        <path d="M577 879.500H590" stroke="#cfcfcf" strokeDasharray="1.500 1" />
        {/* print string nodes */}
        {[[704, 879], [1216, 871]].map(([x, y]) => (
          <g key={x}>
            <rect x={x} y={y} width="19" height="17" fill="#161819" />
            <rect x={x} y={y} width="19" height="5" fill="#235274" />
            <rect x={x + 1} y={y + 6} width="1.600" height="2" fill="#fff" />
            <rect x={x + 16} y={y + 6} width="1.800" height="2" fill="#fff" />
            <rect x={x + 2} y={y + 9.500} width="1.300" height="1.300" fill="#2a6a9a" />
            <rect x={x + 2} y={y + 12.500} width="1.300" height="1.300" fill="#a0249a" />
            <rect x={x + 8} y={y + 15} width="2.500" height="1" fill="#ddd" />
          </g>
        ))}
        {/* return node */}
        <rect x="1770" y="725" width="19" height="15" fill="#202020" />
        <rect x="1770" y="725" width="19" height="5" fill="#6b147d" />
        <rect x="1771" y="731" width="1.600" height="2" fill="#fff" />
        <rect x="1771" y="734.500" width="1.600" height="1.300" fill="#86e63c" />
        <rect x="1771" y="737.500" width="1.600" height="1.300" fill="#86e63c" />
      </svg>

      {bubbles.map(([x, y, , text, spacing]) => (
        <span
          key={text}
          className="absolute whitespace-nowrap text-[12.770px] leading-[25px] text-[#454545]"
          style={{ left: x - OX + 8, top: y - OY + 1, letterSpacing: spacing }}
        >
          {text}
        </span>
      ))}

      <div className="absolute inset-0 shadow-[inset_0_0_70px_rgba(0,0,0,0.5)]" />

      <div className="absolute inset-x-0 top-0 flex h-[42px] items-center bg-black/55">
        <svg viewBox="0 0 60 24" className="ml-3 h-6 w-[60px]">
          <path d="M1 11.500 L10 1 V7H17V16H10V22Z M59 11.500 L50 1 V7H43V16H50V22Z" fill="#111" transform="translate(0 1.500)" />
          <path d="M1 11 L10 .5 V6.500H17V15.500H10V21.500Z M59 11 L50 .5 V6.500H43V15.500H50V21.500Z" fill="#a2a2a2" />
        </svg>
        <FunctionIcon className="ml-[729px] h-6 w-[19px]" />
        <div className="-mt-[2px] ml-[17px] flex items-center text-[19.200px] text-[#9b9b9b]">
          <span>DamageFormula</span>
          <svg viewBox="0 0 9 14" className="mx-2 mt-[2px] h-[14px] w-[9px]">
            <path d="M1 1L7.500 7L1 13" fill="none" stroke="#e0e0e0" strokeWidth="2" />
          </svg>
          <span>DamageCalculation</span>
        </div>
        <span className="absolute right-[7px] top-[3px] font-['Roboto_Condensed',Roboto,sans-serif] text-[20.200px] font-bold leading-7 text-[#323232]">
          Zoom -11
        </span>
      </div>
      <span className="absolute bottom-[13px] right-[10px] font-['Roboto_Condensed',Roboto,sans-serif] text-[64.500px] font-bold leading-[70px] tracking-[-0.500px] text-white/20">
        BLUEPRINT
      </span>
    </div>
  );
}

function GraphTabs() {
  return (
    <div className="flex h-[26px] shrink-0 items-end gap-[2px] pl-1">
      <div className="flex h-[21px] w-[149px] items-center rounded-t-[3px] bg-[#404040] pl-[6px]">
        <GraphIcon />
        <span className="-mt-px ml-[3px] flex-1 text-[12.100px] text-[#dcdcdc] [text-shadow:1px_1px_0_#111]">Collapse Graph 0</span>
        <Close className="mr-[9px]" />
      </div>
      <div className="flex h-[21px] w-[150px] items-center rounded-t-[3px] border-t border-[#b3951d] bg-[#606060] pl-[6px]">
        <FunctionIcon className="h-4 w-[13px]" />
        <span className="-mt-[2px] ml-[7px] flex-1 whitespace-nowrap text-[12.100px] text-[#e6e6e6] [text-shadow:1px_1px_0_#111]">Damage Calculatio</span>
        <Close className="mr-[9px]" />
      </div>
    </div>
  );
}

function CompilerResults() {
  return (
    <div className="flex h-[269px] shrink-0 flex-col pt-[5px]">
      <PanelTab
        className="ml-1"
        label="Compiler Results"
        icon={
          <svg viewBox="0 0 16 16" className="h-4 w-4 shrink-0">
            <path d="M2 1 L14 2.500 L15.500 15 L3 16Z" fill="#1b2233" opacity=".6" />
            <path d="M1.500 .5 L14.500 2 L14 15 L1.500 13.500Z" fill="#dbe6fb" />
            <path d="M4 4 L8.500 7.500 L4 11 M8 12H13" fill="none" stroke="#25365e" strokeWidth="1.700" />
          </svg>
        }
      />
      <div className="flex flex-1 flex-col rounded-b-[3px] border-2 border-[#606060] bg-[#3e3e3e] px-1 pt-1">
        <div className="h-[200px] bg-[#222222]" />
        <div className="flex flex-1 items-center justify-end pr-[6px] text-[12.100px] text-[#8a8a8a]">Clear</div>
      </div>
    </div>
  );
}

export default function App() {
  return (
    <div className="flex h-[1440px] w-[2560px] flex-col overflow-hidden bg-[#222222] font-[Roboto,sans-serif]">
      <TitleBar />
      <MenuBar />
      <div className="flex h-[1393px] shrink-0">
        <MyBlueprint />
        <div className="ml-[5px] flex w-[1896px] shrink-0 flex-col">
          <Toolbar />
          <GraphTabs />
          <Graph />
          <CompilerResults />
        </div>
        <div className="ml-[5px] flex w-[351px] shrink-0 flex-col">
          <PanelTab
            className="ml-1"
            label="Details"
            icon={
              <svg viewBox="0 0 16 16" className="h-4 w-4 shrink-0">
                <path d="M10 10.500 L15 15" stroke="#4f74d6" strokeWidth="2.200" />
                <circle cx="7" cy="7" r="5.700" fill="#3d4047" stroke="#7f9ce8" strokeWidth="1.500" />
                <path d="M7 3.200V4.900 M5.600 6.500H7.300V10 M5.500 10.300H8.800" fill="none" stroke="#f1f1f1" strokeWidth="1.500" />
              </svg>
            }
          />
          <div className="flex-1 bg-[#606060]" />
        </div>
      </div>
    </div>
  );
}
